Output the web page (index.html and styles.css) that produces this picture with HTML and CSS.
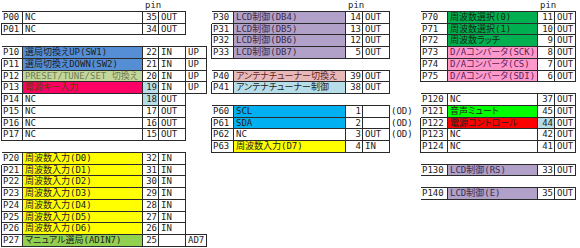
FILE: index.html
```html
<!DOCTYPE html>
<html lang="ja">
<head>
<meta charset="utf-8">
<title>Port Assignment</title>
<link rel="stylesheet" href="styles.css">
</head>
<body>
<div class="sheet">

  <div class="blk blk-left">
    <div class="hdr hdr-left"><span class="pinhdr">pin</span></div>
    <div class="tbl g-left">
      <div class="c port f-l">P00</div><div class="c name">NC</div><div class="c num">35</div><div class="c dir">OUT</div><div class="e"></div>
      <div class="c port f-l">P01</div><div class="c name">NC</div><div class="c num">34</div><div class="c dir">OUT</div><div class="e"></div>
    </div>
    <div class="tbl g-left">
      <div class="c port f-l">P10</div><div class="c name bg-blue">選局切換えUP(SW1)</div><div class="c num">22</div><div class="c dir">IN</div><div class="c dir">UP</div>
      <div class="c port">P11</div><div class="c name bg-blue">選局切換えDOWN(SW2)</div><div class="c num">21</div><div class="c dir">IN</div><div class="c dir">UP</div>
      <div class="c port">P12</div><div class="c name bg-olive">PRESET/TUNE/SET 切換え</div><div class="c num">20</div><div class="c dir">IN</div><div class="c dir">UP</div>
      <div class="c port">P13</div><div class="c name bg-rose">電源キー入力</div><div class="c num bg-aqua">19</div><div class="c dir">IN</div><div class="c dir">UP</div>
      <div class="c port">P14</div><div class="c name">NC</div><div class="c num bg-aqua">18</div><div class="c dir">OUT</div><div class="e"></div>
      <div class="c port">P15</div><div class="c name">NC</div><div class="c num">17</div><div class="c dir">OUT</div><div class="e"></div>
      <div class="c port">P16</div><div class="c name">NC</div><div class="c num">16</div><div class="c dir">OUT</div><div class="e"></div>
      <div class="c port">P17</div><div class="c name">NC</div><div class="c num">15</div><div class="c dir">OUT</div><div class="e"></div>
    </div>
    <div class="tbl g-left">
      <div class="c port f-l">P20</div><div class="c name bg-yellow">周波数入力(D0)</div><div class="c num">32</div><div class="c dir">IN</div><div class="e"></div>
      <div class="c port">P21</div><div class="c name bg-yellow">周波数入力(D1)</div><div class="c num">31</div><div class="c dir">IN</div><div class="e"></div>
      <div class="c port">P22</div><div class="c name bg-yellow">周波数入力(D2)</div><div class="c num">30</div><div class="c dir">IN</div><div class="e"></div>
      <div class="c port">P23</div><div class="c name bg-yellow">周波数入力(D3)</div><div class="c num">29</div><div class="c dir">IN</div><div class="e"></div>
      <div class="c port">P24</div><div class="c name bg-yellow">周波数入力(D4)</div><div class="c num">28</div><div class="c dir">IN</div><div class="e"></div>
      <div class="c port">P25</div><div class="c name bg-yellow">周波数入力(D5)</div><div class="c num">27</div><div class="c dir">IN</div><div class="e"></div>
      <div class="c port">P26</div><div class="c name bg-yellow">周波数入力(D6)</div><div class="c num">26</div><div class="c dir">IN</div><div class="e"></div>
      <div class="c port">P27</div><div class="c name bg-lime">マニュアル選局(ADIN7)</div><div class="c num">25</div><div class="c dir"></div><div class="c dir boxed">AD7</div>
    </div>
  </div>

  <div class="blk blk-mid">
    <div class="hdr hdr-mid"><span class="pinhdr">pin</span></div>
    <div class="tbl g-mid">
      <div class="c port f-l">P30</div><div class="c name bg-purple">LCD制御(DB4)</div><div class="c num">14</div><div class="c dir">OUT</div><div class="e"></div>
      <div class="c port">P31</div><div class="c name bg-purple">LCD制御(DB5)</div><div class="c num">13</div><div class="c dir">OUT</div><div class="e"></div>
      <div class="c port">P32</div><div class="c name bg-purple">LCD制御(DB6)</div><div class="c num">12</div><div class="c dir">OUT</div><div class="e"></div>
      <div class="c port">P33</div><div class="c name bg-purple">LCD制御(DB7)</div><div class="c num">5</div><div class="c dir">OUT</div><div class="e"></div>
    </div>
    <div class="tbl g-mid">
      <div class="c port f-l">P40</div><div class="c name bg-salmon">アンテナチューナー切換え</div><div class="c num">39</div><div class="c dir">OUT</div><div class="e"></div>
      <div class="c port">P41</div><div class="c name bg-aqua">アンテナチューナー制御</div><div class="c num">38</div><div class="c dir">OUT</div><div class="e"></div>
    </div>
    <div class="tbl g-mid">
      <div class="c port f-l">P60</div><div class="c name bg-cyan">SCL</div><div class="c num">1</div><div class="c dir"></div><div class="e od">(OD)</div>
      <div class="c port">P61</div><div class="c name bg-cyan">SDA</div><div class="c num">2</div><div class="c dir"></div><div class="e od">(OD)</div>
      <div class="c port">P62</div><div class="c name">NC</div><div class="c num">3</div><div class="c dir">OUT</div><div class="e od">(OD)</div>
      <div class="c port">P63</div><div class="c name bg-yellow">周波数入力(D7)</div><div class="c num">4</div><div class="c dir">IN</div><div class="e"></div>
    </div>
  </div>

  <div class="blk blk-right">
    <div class="hdr hdr-right"><span class="pinhdr">pin</span></div>
    <div class="tbl g-right">
      <div class="c port f-l">P70</div><div class="c name bg-green">周波数選択(0)</div><div class="c num">11</div><div class="c dir">OUT</div>
      <div class="c port">P71</div><div class="c name bg-green">周波数選択(1)</div><div class="c num">10</div><div class="c dir">OUT</div>
      <div class="c port">P72</div><div class="c name bg-green">周波数ラッチ</div><div class="c num">9</div><div class="c dir">OUT</div>
      <div class="c port">P73</div><div class="c name bg-pink">D/Aコンバータ(SCK)</div><div class="c num">8</div><div class="c dir">OUT</div>
      <div class="c port">P74</div><div class="c name bg-pink">D/Aコンバータ(CS)</div><div class="c num">7</div><div class="c dir">OUT</div>
      <div class="c port">P75</div><div class="c name bg-pink">D/Aコンバータ(SDI)</div><div class="c num">6</div><div class="c dir">OUT</div>
    </div>
    <div class="tbl g-right">
      <div class="c port f-l">P120</div><div class="c name">NC</div><div class="c num">37</div><div class="c dir">OUT</div>
      <div class="c port">P121</div><div class="c name bg-bright">音声ミュート</div><div class="c num">45</div><div class="c dir">OUT</div>
      <div class="c port">P122</div><div class="c name bg-red">電源コントロール</div><div class="c num bg-aqua">44</div><div class="c dir">OUT</div>
      <div class="c port">P123</div><div class="c name">NC</div><div class="c num">42</div><div class="c dir">OUT</div>
      <div class="c port">P124</div><div class="c name">NC</div><div class="c num">41</div><div class="c dir">OUT</div>
    </div>
    <div class="tbl g-right">
      <div class="c port f-l">P130</div><div class="c name bg-purple">LCD制御(RS)</div><div class="c num">33</div><div class="c dir">OUT</div>
    </div>
    <div class="tbl g-right">
      <div class="c port f-l">P140</div><div class="c name bg-purple">LCD制御(E)</div><div class="c num">35</div><div class="c dir">OUT</div>
    </div>
  </div>

</div>
</body>
</html>
```

FILE: styles.css
```css
* { box-sizing: border-box; }

html, body {
  margin: 0;
  padding: 0;
  background: #ffffff;
}

body {
  font-family: "DejaVu Sans Mono", "Noto Sans CJK JP", monospace;
  font-feature-settings: "palt";
  font-size: 9px;
  color: #222222;
  width: 580px;
  height: 248px;
  overflow: hidden;
}

.sheet {
  display: flex;
  align-items: flex-start;
  padding-left: 2px;
}

.blk {
  display: flex;
  flex-direction: column;
}

.blk-left { width: 205px; margin-right: 5px; }
.blk-mid { width: 209px; }
.blk-right { width: 155px; }

.hdr {
  display: grid;
  height: 11.75px;
  line-height: 11px;
}
.hdr-left { grid-template-columns: 141px 18px; }
.hdr-mid { grid-template-columns: 134px 17px; }
.hdr-right { grid-template-columns: 117px 17px; }
.pinhdr { grid-column: 2; padding-left: 2px; }

.tbl {
  display: grid;
  grid-auto-rows: 11.75px;
}
.tbl + .tbl { margin-top: 11.75px; }

.g-left { grid-template-columns: 21px 120px 16px 27px 21px; }
.g-mid { grid-template-columns: 22px 112px 17px 27px 31px; }
.g-right { grid-template-columns: 27px 90px 17px 21px; }

.c {
  border-right: 1px solid #2a2a2a;
  border-bottom: 1px solid #2a2a2a;
  line-height: 10.75px;
  white-space: nowrap;
  overflow-x: clip;
}

/* first row of each table: top edge */
.tbl > .c:nth-child(-n+5) { box-shadow: 0 -1px 0 #2a2a2a; }
.g-right > .c:nth-child(-n+4) { box-shadow: 0 -1px 0 #2a2a2a; }
/* first column: left edge */
.port { box-shadow: -1px 0 0 #2a2a2a; padding-left: 1px; }
.port.f-l { box-shadow: -1px 0 0 #2a2a2a, 0 -1px 0 #2a2a2a, -1px -1px 0 #2a2a2a; }

.name { padding-left: 2px; }
.num { text-align: right; padding-right: 1px; }
.dir { padding-left: 2px; }

.e { line-height: 10.75px; white-space: nowrap; }
.od { padding-left: 1px; }
.boxed { box-shadow: 0 -1px 0 #2a2a2a; }

/* fills */
.bg-blue { background: #558ed5; }
.bg-olive { background: #c4d79b; color: #6f7d55; }
.bg-rose { background: #ff0066; color: #5a4200; }
.bg-aqua { background: #b7dee8; }
.bg-yellow { background: #ffff00; }
.bg-lime { background: #92d050; }
.bg-purple { background: #b1a0c7; color: #3a2d4d; }
.bg-salmon { background: #e6b8b7; color: #632523; }
.bg-cyan { background: #00b0f0; }
.bg-green { background: #00b050; color: #0d2a12; }
.bg-pink { background: #ff99cc; color: #5b1f58; }
.bg-bright { background: #00ff00; }
.bg-red { background: #ff0000; }
```
